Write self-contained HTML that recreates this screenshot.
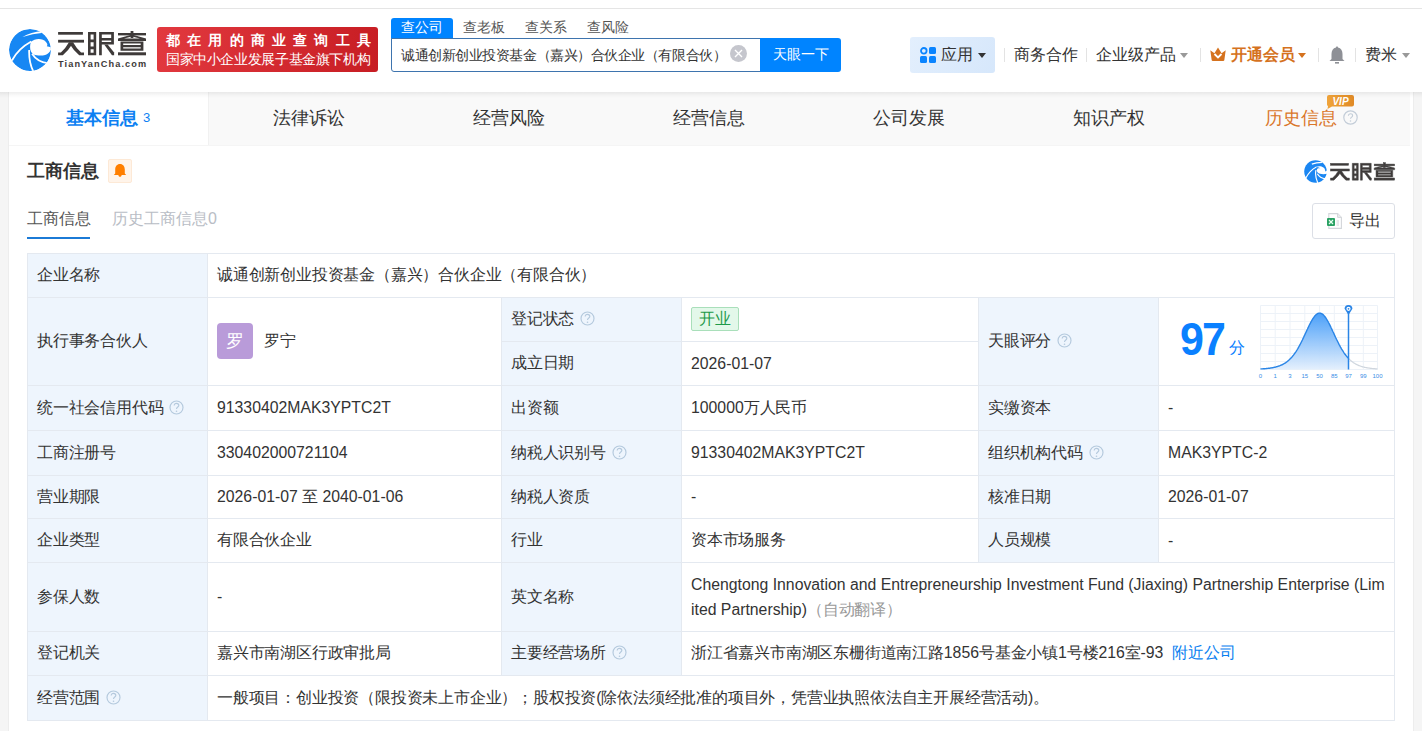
<!DOCTYPE html>
<html><head><meta charset="utf-8">
<style>
*{box-sizing:border-box;margin:0;padding:0}
html,body{width:1422px;height:731px;overflow:hidden}
body{background:#f5f5f5;font-family:"Liberation Sans",sans-serif;color:#333;position:relative;font-size:16px}
.a{position:absolute;white-space:nowrap}
#top{left:0;top:0;width:1422px;height:92px;background:#fff}
#topline{left:0;top:8px;width:1422px;height:1px;background:#e5e5e5}
#hshadow{left:0;top:92px;width:1422px;height:6px;background:linear-gradient(rgba(0,0,0,.065),rgba(0,0,0,.02) 60%,rgba(0,0,0,0))}
#card{left:8px;top:92px;width:1406px;height:660px;background:#fff;border-left:1px solid #ededed;border-right:1px solid #ededed}
#tabs{left:9px;top:92px;width:1401px;height:54px;background:#f9f9f9;border-bottom:1px solid #f5f5f5}
.tab{top:0;height:53px;width:200px;line-height:53px;text-align:center;font-size:18px;color:#333}
.tab.on{background:#fff;color:#0c7ff2;font-weight:bold}
.hdr-sep{width:1px;height:14px;top:48px;background:#e3e3e3}
.nav{top:43px;line-height:24px;font-size:16px;color:#333}
.caret{width:0;height:0;border-left:4px solid transparent;border-right:4px solid transparent;border-top:5px solid #999}
</style><style>
.c{position:absolute;border-left:1px solid #e4e9f0;border-top:1px solid #e4e9f0;padding-left:9px;display:flex;align-items:center;font-size:16px;letter-spacing:-0.2px;color:#333;white-space:nowrap;background:#fff}
.c.lab{background:#eef5fd}
.l{font-size:15.8px;letter-spacing:0}
.av{display:inline-block;vertical-align:middle;position:relative;top:-1px;width:36px;height:36px;border-radius:4px;background:#b99bd9;color:#fff;font-size:18px;line-height:36px;text-align:center}
.tag{display:inline-block;position:relative;top:-1px;height:24px;line-height:22px;padding:0 7px;border:1px solid #a9dfba;border-radius:2px;background:#e3f8ea;color:#1f9a4a}
svg.q{display:inline-block;vertical-align:middle;margin-left:6px;position:relative}
.en{font-size:15.8px;letter-spacing:0;line-height:25px;white-space:nowrap}
.tr{color:#999;font-size:16px;letter-spacing:-0.2px}
.lnk{color:#0a7ff0;margin-left:9px}
</style></head><body>
<div class="a" id="top"></div>
<div class="a" id="topline"></div>
<svg class="a" style="left:9px;top:29px" width="42" height="42" viewBox="0 0 100 100"><defs><clipPath id="cc"><circle cx="50" cy="50" r="50"/></clipPath></defs>
<g clip-path="url(#cc)"><circle cx="50" cy="50" r="50" fill="#1787f3"/>
<path d="M52 31 C62 22 80 21 89 32 C92 36 92 39 90 41 L101 44 L101 47 C98 54 93 60 86 62 C78 64 66 64 58 60 C51 56 48 45 52 31Z" fill="#fff"/>
<path d="M7 75 Q22 47 53 30" stroke="#fff" stroke-width="4.2" fill="none"/>
<path d="M48 50 Q47 80 58 101" stroke="#fff" stroke-width="4.2" fill="none"/>
<path d="M55 59 Q67 79 95 82" stroke="#fff" stroke-width="4.2" fill="none"/>
<path d="M32 19 Q52 8 80 5 L82 9 Q56 11 32 19Z" fill="#fff"/>
</g></svg>
<svg class="a" style="left:0;top:0" width="150" height="60" viewBox="0 0 150 60"><g id="tyc" fill="#3e3a39">
<rect x="58.1" y="32" width="24.8" height="2.7"/><rect x="58.1" y="39.8" width="25.9" height="2.8"/>
<path d="M68.8 42.5 L73.4 42.5 Q68.5 50.5 62.8 55.3 L58.1 55.3 L58.1 52.5 L60.9 52.5 Q65.8 48 68.8 42.5Z"/><path d="M68.6 42.5 L73.2 42.5 Q76.2 48 81.1 52.5 L84 52.5 L84 55.3 L79.2 55.3 Q73.5 50.5 68.6 42.5Z"/>
<path d="M88 32 H96.2 V55.3 H88Z M90.6 34.6 V39.6 H93.6 V34.6Z M90.6 42.2 V46.6 H93.6 V42.2Z M90.6 49.2 V52.7 H93.6 V49.2Z" fill-rule="evenodd"/>
<path d="M99.1 32 H113.9 V44.6 H101.8 V55.3 H99.1Z M101.8 34.6 V37.9 H111.2 V34.6Z M101.8 40.4 V42 H111.2 V40.4Z" fill-rule="evenodd"/>
<path d="M104.2 44.6 L107.6 44.6 L114.1 52.6 L114.1 55.3 L112 55.3Z"/>
<rect x="118" y="33" width="28" height="2.4"/><rect x="130.6" y="31" width="2.8" height="7"/>
<path d="M118 38.4 L130.5 35 L133.5 35 L146 38.4 L146 40.9 L118 40.9Z M124 38.4 L140 38.4 L132 36.4Z" fill-rule="evenodd"/>
<path d="M120.5 41.6 H143.4 V50.8 H120.5Z M123.2 43.4 V45 H140.7 V43.4Z M123.2 47.2 V48.4 H140.7 V47.2Z" fill-rule="evenodd"/>
<rect x="118" y="52.3" width="28" height="3"/>
</g></svg>
<div class="a" style="left:58px;top:59px;font-size:9.2px;line-height:11px;font-weight:bold;color:#3e3a39;letter-spacing:1.1px">TianYanCha.com</div>
<div class="a" style="left:157px;top:27px;width:221px;height:45px;border-radius:3px;background:linear-gradient(100deg,#e2393f,#c71d23)"></div>
<div class="a" style="left:166px;top:32px;font-size:13.5px;line-height:18px;color:#fff;font-weight:bold;letter-spacing:7.2px">都在用的商业查询工具</div>
<div class="a" style="left:166px;top:50px;font-size:14px;line-height:18px;color:#fff;letter-spacing:-0.38px">国家中小企业发展子基金旗下机构</div>
<div class="a" style="left:391px;top:18px;width:62px;height:21px;background:#0084ff;border-radius:3px 3px 0 0"></div>
<div class="a" style="left:391px;top:18px;width:62px;line-height:20px;font-size:13.5px;color:#fff;text-align:center">查公司</div>
<div class="a" style="left:463px;top:18px;line-height:20px;font-size:13.5px;color:#555">查老板</div>
<div class="a" style="left:525px;top:18px;line-height:20px;font-size:13.5px;color:#555">查关系</div>
<div class="a" style="left:587px;top:18px;line-height:20px;font-size:13.5px;color:#555">查风险</div>
<div class="a" style="left:391px;top:38px;width:372px;height:34px;border:1px solid #3e74ae;border-radius:0 0 0 3px;background:#fff"></div>
<div class="a" style="left:401px;top:43px;line-height:24px;font-size:14px;letter-spacing:-0.45px;color:#333">诚通创新创业投资基金（嘉兴）合伙企业（有限合伙）</div>
<div class="a" style="left:730px;top:45px;width:17px;height:17px;border-radius:50%;background:#c5c6cd"></div>
<svg class="a" style="left:730px;top:45px" width="17" height="17"><path d="M5 5 L12 12 M12 5 L5 12" stroke="#fff" stroke-width="1.4"/></svg>
<div class="a" style="left:760px;top:38px;width:81px;height:34px;background:#0084ff;border-radius:0 3px 3px 0;color:#fff;font-size:14px;line-height:33px;text-align:center">天眼一下</div>
<div class="a" style="left:910px;top:37px;width:85px;height:36px;border-radius:3px;background:linear-gradient(120deg,#e3effd,#d6e7fb)"></div>
<svg class="a" style="left:920px;top:47px" width="16" height="16"><circle cx="3.8" cy="3.8" r="2.8" fill="none" stroke="#0a84ff" stroke-width="1.8"/><rect x="9" y="0" width="7" height="7" rx="1.5" fill="#0a84ff"/><rect x="0" y="9" width="7" height="7" rx="1.5" fill="#0a84ff"/><rect x="9" y="9" width="7" height="7" rx="1.5" fill="#0a84ff"/></svg>
<div class="a nav" style="left:941px">应用</div>
<div class="a caret" style="left:978px;top:53px;border-top-color:#333"></div>
<div class="a hdr-sep" style="left:1004px"></div>
<div class="a nav" style="left:1014px">商务合作</div>
<div class="a hdr-sep" style="left:1086px"></div>
<div class="a nav" style="left:1096px">企业级产品</div>
<div class="a caret" style="left:1180px;top:53px;border-top-color:#999"></div>
<div class="a hdr-sep" style="left:1200px"></div>
<svg class="a" style="left:1210px;top:47px" width="16" height="14" viewBox="0 0 16 14"><path d="M0.3 3.2 L4.4 6.2 L8 0.4 L11.6 6.2 L15.7 3.2 L14.3 13.2 Q14.1 14 13.2 14 L2.8 14 Q1.9 14 1.7 13.2Z" fill="#d5721e"/><path d="M4.5 7 L8 10.5 L11.5 7" stroke="#fff" stroke-width="1.8" fill="none"/></svg>
<div class="a nav" style="left:1231px;color:#d5721e;font-weight:bold">开通会员</div>
<div class="a caret" style="left:1298px;top:53px;border-top-color:#d5721e"></div>
<div class="a hdr-sep" style="left:1318px"></div>
<svg class="a" style="left:1329px;top:46px" width="16" height="18" viewBox="0 0 16 18"><path d="M8 0.5 C8.8 0.5 9 1 9 1.6 C12 2.3 13.5 5 13.5 8 L13.5 13 L15.5 15 L0.5 15 L2.5 13 L2.5 8 C2.5 5 4 2.3 7 1.6 C7 1 7.2 0.5 8 0.5Z" fill="#8e9096"/><rect x="6" y="16" width="4" height="1.6" fill="#8e9096"/></svg>
<div class="a hdr-sep" style="left:1355px"></div>
<div class="a nav" style="left:1365px">费米</div>
<div class="a caret" style="left:1402px;top:53px;border-top-color:#999"></div>

<div class="a" id="card"></div>
<div class="a" id="tabs">
  <div class="a tab on" style="left:0;width:199px;padding-left:1px">基本信息<span style="font-weight:normal;font-size:13px;margin-left:6px;position:relative;top:-2px;left:-1.5px">3</span></div>
  <div class="a" style="left:199px;top:0;width:1px;height:53px;background:#f1f1f1"></div>
  <div class="a tab" style="left:200px">法律诉讼</div>
  <div class="a tab" style="left:400px">经营风险</div>
  <div class="a tab" style="left:600px">经营信息</div>
  <div class="a tab" style="left:800px">公司发展</div>
  <div class="a tab" style="left:1000px">知识产权</div>
  <div class="a tab" style="left:1200px;color:#d9762a;padding-left:4px">历史信息<svg width="15" height="15" viewBox="0 0 15 15" style="vertical-align:middle;margin-left:6px;position:relative;top:-2px"><circle cx="7.5" cy="7.5" r="6.7" fill="none" stroke="#c3cdd8" stroke-width="1.2"/><path d="M5.4 5.8 C5.4 4.5 6.3 3.8 7.5 3.8 C8.7 3.8 9.6 4.6 9.6 5.7 C9.6 7 7.5 7.2 7.5 8.7" fill="none" stroke="#c3cdd8" stroke-width="1.1"/><circle cx="7.5" cy="10.9" r="0.75" fill="#c3cdd8"/></svg></div>
  <svg class="a" style="left:1317px;top:3px" width="28" height="14" viewBox="0 0 28 14"><defs><linearGradient id="vg" x1="0" y1="0" x2="1" y2="0"><stop offset="0" stop-color="#f0a43a"/><stop offset="1" stop-color="#e08a26"/></linearGradient></defs><path d="M3 0 H26 Q28 0 28 2 V9.5 Q28 11.5 26 11.5 H6 L1.5 14 L2 11 Q1 10.5 1 9.5 V2 Q1 0 3 0Z" fill="url(#vg)"/><text x="14.5" y="9.6" font-family="Liberation Sans" font-weight="bold" font-style="italic" font-size="10" fill="#fff" text-anchor="middle">VIP</text></svg>
</div>
<div class="a" id="hshadow"></div>
<div class="a" style="left:27px;top:159px;font-size:18px;line-height:24px;font-weight:bold;color:#333">工商信息</div>
<div class="a" style="left:108px;top:159px;width:24px;height:24px;border-radius:2px;background:#fff4ea;border:1px solid #fde9d6"></div>
<svg class="a" style="left:113px;top:163px" width="14" height="15" viewBox="0 0 14 15"><path d="M7 1 C10 1 11.8 3.4 11.8 6.6 L11.8 10.6 L13.2 12 L0.8 12 L2.2 10.6 L2.2 6.6 C2.2 3.4 4 1 7 1Z" fill="#ff7f00"/><path d="M5.4 12 L8.6 12 C8.6 13.2 7.9 13.8 7 13.8 C6.1 13.8 5.4 13.2 5.4 12Z" fill="#ff7f00"/></svg>
<svg class="a" style="left:1304px;top:160px" width="23" height="23" viewBox="0 0 100 100">
  <circle cx="50" cy="50" r="49" fill="#1a86f2"/>
  <path d="M50 30 C70 22 92 30 92 46 C92 52 96 50 100 46 L100 60 C90 62 78 62 70 60 C60 58 54 50 56 42 C58 36 66 34 72 38 C66 30 56 30 50 30Z" fill="#fff"/>
  <path d="M8 78 C20 55 34 40 54 30" stroke="#fff" stroke-width="5" fill="none"/>
  <path d="M34 18 C48 12 62 10 78 10" stroke="#fff" stroke-width="5" fill="none"/>
  <path d="M52 44 C48 62 52 82 60 100" stroke="#fff" stroke-width="5" fill="none"/>
  <path d="M58 60 C66 74 78 80 94 82" stroke="#fff" stroke-width="5" fill="none"/>
</svg>
<svg class="a" style="left:1320px;top:150px" width="80" height="40" viewBox="0 0 80 40"><g transform="translate(10.4 13) scale(0.73 0.72) translate(-58 -31.5)"><use href="#tyc" fill="#4a4a4a" stroke="#4a4a4a" stroke-width="0.7"/></g></svg>
<div class="a" style="left:27px;top:207px;font-size:16px;line-height:24px;color:#555">工商信息</div>
<div class="a" style="left:27px;top:237px;width:63px;height:2px;background:#1b7ad6"></div>
<div class="a" style="left:112px;top:207px;font-size:16px;line-height:24px;color:#b9bdc5">历史工商信息0</div>
<div class="a" style="left:1312px;top:203px;width:83px;height:36px;border:1px solid #dcdfe6;border-radius:3px;background:#fff"></div>
<svg class="a" style="left:1327px;top:213px" width="16" height="16" viewBox="0 0 16 16"><path d="M1.8 0.6 L10.6 0.6 L14.4 4.4 L14.4 15.4 L1.8 15.4Z" fill="#fff" stroke="#d3d6da" stroke-width="1.1"/><path d="M10.6 0.6 L10.6 4.4 L14.4 4.4" fill="#eceef0" stroke="#d3d6da" stroke-width="1"/><rect x="0" y="5" width="8" height="8" rx="1" fill="#2aa163"/><path d="M2 7 L6 11 M6 7 L2 11" stroke="#e8fff0" stroke-width="1.2"/><path d="M9.5 8 h2.5 M9.5 10 h2.5 M9.5 12 h2.5" stroke="#cfd2d6" stroke-width="1"/></svg>
<div class="a" style="left:1349px;top:209px;font-size:16px;line-height:24px;color:#333">导出</div>

<div class="a" style="left:27px;top:253px;width:1368px;height:468px;border-right:1px solid #e4e9f0;border-bottom:1px solid #e4e9f0"></div>
<div class="c lab" style="left:27px;top:253px;width:180px;height:44px;"><div>企业名称</div></div>
<div class="c" style="left:207px;top:253px;width:1187px;height:44px;"><div>诚通创新创业投资基金（嘉兴）合伙企业（有限合伙）</div></div>
<div class="c lab" style="left:27px;top:297px;width:180px;height:88px;"><div>执行事务合伙人</div></div>
<div class="c" style="left:207px;top:297px;width:294px;height:88px;"><div><span class="av">罗</span><span style="margin-left:11px">罗宁</span></div></div>
<div class="c lab" style="left:501px;top:297px;width:180px;height:44px;"><div>登记状态<svg class="q" id="q0" style="top:-1.266px;left:-0.203px" width="15" height="15" viewBox="0 0 15 15"><circle cx="7.5" cy="7.5" r="6.5" fill="none" stroke="#b4c9dd" stroke-width="1.15"/><path d="M5.2 5.6 C5.2 4.1 6.2 3.3 7.5 3.3 C8.8 3.3 9.8 4.2 9.8 5.4 C9.8 6.9 7.5 7.1 7.5 9" fill="none" stroke="#b4c9dd" stroke-width="1.15"/><circle cx="7.5" cy="11.2" r="0.8" fill="#b4c9dd"/></svg></div></div>
<div class="c" style="left:681px;top:297px;width:297px;height:44px;"><div><span class="tag">开业</span></div></div>
<div class="c lab" style="left:501px;top:341px;width:180px;height:44px;"><div>成立日期</div></div>
<div class="c" style="left:681px;top:341px;width:297px;height:44px;"><div><span class="l">2026-01-07</span></div></div>
<div class="c lab" style="left:978px;top:297px;width:180px;height:88px;"><div>天眼评分<svg class="q" id="q1" style="top:-1.266px;left:-0.203px" width="15" height="15" viewBox="0 0 15 15"><circle cx="7.5" cy="7.5" r="6.5" fill="none" stroke="#b4c9dd" stroke-width="1.15"/><path d="M5.2 5.6 C5.2 4.1 6.2 3.3 7.5 3.3 C8.8 3.3 9.8 4.2 9.8 5.4 C9.8 6.9 7.5 7.1 7.5 9" fill="none" stroke="#b4c9dd" stroke-width="1.15"/><circle cx="7.5" cy="11.2" r="0.8" fill="#b4c9dd"/></svg></div></div>
<div class="c" style="left:1158px;top:297px;width:236px;height:88px;"><div></div></div>
<div class="c lab" style="left:27px;top:385px;width:180px;height:45px;"><div>统一社会信用代码<svg class="q" id="q2" style="top:-0.766px;left:-0.406px" width="15" height="15" viewBox="0 0 15 15"><circle cx="7.5" cy="7.5" r="6.5" fill="none" stroke="#b4c9dd" stroke-width="1.15"/><path d="M5.2 5.6 C5.2 4.1 6.2 3.3 7.5 3.3 C8.8 3.3 9.8 4.2 9.8 5.4 C9.8 6.9 7.5 7.1 7.5 9" fill="none" stroke="#b4c9dd" stroke-width="1.15"/><circle cx="7.5" cy="11.2" r="0.8" fill="#b4c9dd"/></svg></div></div>
<div class="c" style="left:207px;top:385px;width:294px;height:45px;"><div><span class="l">91330402MAK3YPTC2T</span></div></div>
<div class="c lab" style="left:501px;top:385px;width:180px;height:45px;"><div>出资额</div></div>
<div class="c" style="left:681px;top:385px;width:297px;height:45px;"><div><span class="l">100000</span>万人民币</div></div>
<div class="c lab" style="left:978px;top:385px;width:180px;height:45px;"><div>实缴资本</div></div>
<div class="c" style="left:1158px;top:385px;width:236px;height:45px;"><div><span class="l">-</span></div></div>
<div class="c lab" style="left:27px;top:430px;width:180px;height:45px;"><div>工商注册号</div></div>
<div class="c" style="left:207px;top:430px;width:294px;height:45px;"><div><span class="l">330402000721104</span></div></div>
<div class="c lab" style="left:501px;top:430px;width:180px;height:45px;"><div>纳税人识别号<svg class="q" id="q3" style="top:-0.766px;left:0.188px" width="15" height="15" viewBox="0 0 15 15"><circle cx="7.5" cy="7.5" r="6.5" fill="none" stroke="#b4c9dd" stroke-width="1.15"/><path d="M5.2 5.6 C5.2 4.1 6.2 3.3 7.5 3.3 C8.8 3.3 9.8 4.2 9.8 5.4 C9.8 6.9 7.5 7.1 7.5 9" fill="none" stroke="#b4c9dd" stroke-width="1.15"/><circle cx="7.5" cy="11.2" r="0.8" fill="#b4c9dd"/></svg></div></div>
<div class="c" style="left:681px;top:430px;width:297px;height:45px;"><div><span class="l">91330402MAK3YPTC2T</span></div></div>
<div class="c lab" style="left:978px;top:430px;width:180px;height:45px;"><div>组织机构代码<svg class="q" id="q4" style="top:-0.766px;left:0.188px" width="15" height="15" viewBox="0 0 15 15"><circle cx="7.5" cy="7.5" r="6.5" fill="none" stroke="#b4c9dd" stroke-width="1.15"/><path d="M5.2 5.6 C5.2 4.1 6.2 3.3 7.5 3.3 C8.8 3.3 9.8 4.2 9.8 5.4 C9.8 6.9 7.5 7.1 7.5 9" fill="none" stroke="#b4c9dd" stroke-width="1.15"/><circle cx="7.5" cy="11.2" r="0.8" fill="#b4c9dd"/></svg></div></div>
<div class="c" style="left:1158px;top:430px;width:236px;height:45px;"><div><span class="l">MAK3YPTC-2</span></div></div>
<div class="c lab" style="left:27px;top:475px;width:180px;height:43px;"><div>营业期限</div></div>
<div class="c" style="left:207px;top:475px;width:294px;height:43px;"><div><span class="l">2026-01-07 </span>至<span class="l"> 2040-01-06</span></div></div>
<div class="c lab" style="left:501px;top:475px;width:180px;height:43px;"><div>纳税人资质</div></div>
<div class="c" style="left:681px;top:475px;width:297px;height:43px;"><div><span class="l">-</span></div></div>
<div class="c lab" style="left:978px;top:475px;width:180px;height:43px;"><div>核准日期</div></div>
<div class="c" style="left:1158px;top:475px;width:236px;height:43px;"><div><span class="l">2026-01-07</span></div></div>
<div class="c lab" style="left:27px;top:518px;width:180px;height:44px;"><div>企业类型</div></div>
<div class="c" style="left:207px;top:518px;width:294px;height:44px;"><div>有限合伙企业</div></div>
<div class="c lab" style="left:501px;top:518px;width:180px;height:44px;"><div>行业</div></div>
<div class="c" style="left:681px;top:518px;width:297px;height:44px;"><div>资本市场服务</div></div>
<div class="c lab" style="left:978px;top:518px;width:180px;height:44px;"><div>人员规模</div></div>
<div class="c" style="left:1158px;top:518px;width:236px;height:44px;"><div><span class="l">-</span></div></div>
<div class="c lab" style="left:27px;top:562px;width:180px;height:69px;"><div>参保人数</div></div>
<div class="c" style="left:207px;top:562px;width:294px;height:69px;"><div><span class="l">-</span></div></div>
<div class="c lab" style="left:501px;top:562px;width:180px;height:69px;"><div>英文名称</div></div>
<div class="c" style="left:681px;top:562px;width:713px;height:69px;"><div><div class="en">Chengtong Innovation and Entrepreneurship Investment Fund (Jiaxing) Partnership Enterprise (Lim<br>ited Partnership)<span class="tr">（自动翻译）</span></div></div></div>
<div class="c lab" style="left:27px;top:631px;width:180px;height:44px;"><div>登记机关</div></div>
<div class="c" style="left:207px;top:631px;width:294px;height:44px;"><div>嘉兴市南湖区行政审批局</div></div>
<div class="c lab" style="left:501px;top:631px;width:180px;height:44px;"><div>主要经营场所<svg class="q" id="q5" style="top:-1.266px;left:0.188px" width="15" height="15" viewBox="0 0 15 15"><circle cx="7.5" cy="7.5" r="6.5" fill="none" stroke="#b4c9dd" stroke-width="1.15"/><path d="M5.2 5.6 C5.2 4.1 6.2 3.3 7.5 3.3 C8.8 3.3 9.8 4.2 9.8 5.4 C9.8 6.9 7.5 7.1 7.5 9" fill="none" stroke="#b4c9dd" stroke-width="1.15"/><circle cx="7.5" cy="11.2" r="0.8" fill="#b4c9dd"/></svg></div></div>
<div class="c" style="left:681px;top:631px;width:713px;height:44px;"><div>浙江省嘉兴市南湖区东栅街道南江路<span class="l">1856</span>号基金小镇<span class="l">1</span>号楼<span class="l">216</span>室<span class="l">-93</span><span class="lnk">附近公司</span></div></div>
<div class="c lab" style="left:27px;top:675px;width:180px;height:45px;"><div>经营范围<svg class="q" id="q6" style="top:-0.766px;left:-0.203px" width="15" height="15" viewBox="0 0 15 15"><circle cx="7.5" cy="7.5" r="6.5" fill="none" stroke="#b4c9dd" stroke-width="1.15"/><path d="M5.2 5.6 C5.2 4.1 6.2 3.3 7.5 3.3 C8.8 3.3 9.8 4.2 9.8 5.4 C9.8 6.9 7.5 7.1 7.5 9" fill="none" stroke="#b4c9dd" stroke-width="1.15"/><circle cx="7.5" cy="11.2" r="0.8" fill="#b4c9dd"/></svg></div></div>
<div class="c" style="left:207px;top:675px;width:1187px;height:45px;"><div>一般项目：创业投资（限投资未上市企业）；股权投资<span class="l">(</span>除依法须经批准的项目外，凭营业执照依法自主开展经营活动<span class="l">)</span>。</div></div><svg class="a" style="left:1158px;top:297px" width="236" height="88">
<defs><linearGradient id="gf" x1="0" y1="0" x2="0" y2="1"><stop offset="0" stop-color="#429bf8"/><stop offset="1" stop-color="#e3effd"/></linearGradient></defs>
<g stroke="#edf2f8" stroke-width="1"><line x1="102.5" y1="8.5" x2="102.5" y2="72.5"/><line x1="117.2" y1="8.5" x2="117.2" y2="72.5"/><line x1="132.0" y1="8.5" x2="132.0" y2="72.5"/><line x1="146.8" y1="8.5" x2="146.8" y2="72.5"/><line x1="161.6" y1="8.5" x2="161.6" y2="72.5"/><line x1="176.3" y1="8.5" x2="176.3" y2="72.5"/><line x1="190.5" y1="8.5" x2="190.5" y2="72.5"/><line x1="205.3" y1="8.5" x2="205.3" y2="72.5"/><line x1="219.5" y1="8.5" x2="219.5" y2="72.5"/><line x1="102.5" y1="8.5" x2="219.5" y2="8.5"/><line x1="102.5" y1="16.5" x2="219.5" y2="16.5"/><line x1="102.5" y1="24.5" x2="219.5" y2="24.5"/><line x1="102.5" y1="32.5" x2="219.5" y2="32.5"/><line x1="102.5" y1="40.5" x2="219.5" y2="40.5"/><line x1="102.5" y1="48.5" x2="219.5" y2="48.5"/><line x1="102.5" y1="56.5" x2="219.5" y2="56.5"/><line x1="102.5" y1="64.5" x2="219.5" y2="64.5"/><line x1="102.5" y1="72.5" x2="219.5" y2="72.5"/></g>
<path d="M102.5 72.0 L103.0 71.9 L103.5 71.9 L104.0 71.9 L104.5 71.9 L105.0 71.8 L105.5 71.8 L106.0 71.7 L106.5 71.7 L107.0 71.7 L107.5 71.6 L108.0 71.6 L108.5 71.5 L109.0 71.5 L109.5 71.4 L110.0 71.4 L110.5 71.3 L111.0 71.3 L111.5 71.2 L112.0 71.1 L112.5 71.0 L113.0 71.0 L113.5 70.9 L114.0 70.8 L114.5 70.7 L115.0 70.6 L115.5 70.5 L116.0 70.4 L116.5 70.3 L117.0 70.2 L117.5 70.1 L118.0 69.9 L118.5 69.8 L119.0 69.7 L119.5 69.5 L120.0 69.4 L120.5 69.2 L121.0 69.0 L121.5 68.8 L122.0 68.7 L122.5 68.4 L123.0 68.2 L123.5 68.0 L124.0 67.8 L124.5 67.5 L125.0 67.3 L125.5 67.0 L126.0 66.7 L126.5 66.4 L127.0 66.1 L127.5 65.8 L128.0 65.4 L128.5 65.1 L129.0 64.7 L129.5 64.3 L130.0 63.9 L130.5 63.5 L131.0 63.0 L131.5 62.6 L132.0 62.1 L132.5 61.6 L133.0 61.1 L133.5 60.5 L134.0 59.9 L134.5 59.4 L135.0 58.7 L135.5 58.1 L136.0 57.4 L136.5 56.8 L137.0 56.0 L137.5 55.3 L138.0 54.6 L138.5 53.8 L139.0 53.0 L139.5 52.1 L140.0 51.3 L140.5 50.4 L141.0 49.5 L141.5 48.6 L142.0 47.7 L142.5 46.7 L143.0 45.7 L143.5 44.7 L144.0 43.7 L144.5 42.7 L145.0 41.6 L145.5 40.6 L146.0 39.5 L146.5 38.4 L147.0 37.4 L147.5 36.3 L148.0 35.2 L148.5 34.1 L149.0 33.0 L149.5 32.0 L150.0 30.9 L150.5 29.9 L151.0 28.8 L151.5 27.8 L152.0 26.8 L152.5 25.9 L153.0 24.9 L153.5 24.0 L154.0 23.1 L154.5 22.3 L155.0 21.5 L155.5 20.8 L156.0 20.1 L156.5 19.4 L157.0 18.8 L157.5 18.3 L158.0 17.8 L158.5 17.4 L159.0 17.0 L159.5 16.7 L160.0 16.4 L160.5 16.3 L161.0 16.1 L161.5 16.1 L162.0 16.1 L162.5 16.2 L163.0 16.4 L163.5 16.6 L164.0 16.9 L164.5 17.2 L165.0 17.6 L165.5 18.1 L166.0 18.6 L166.5 19.2 L167.0 19.8 L167.5 20.5 L168.0 21.2 L168.5 22.0 L169.0 22.8 L169.5 23.7 L170.0 24.5 L170.5 25.5 L171.0 26.4 L171.5 27.4 L172.0 28.4 L172.5 29.4 L173.0 30.5 L173.5 31.5 L174.0 32.6 L174.5 33.7 L175.0 34.8 L175.5 35.8 L176.0 36.9 L176.5 38.0 L177.0 39.1 L177.5 40.2 L178.0 41.2 L178.5 42.3 L179.0 43.3 L179.5 44.3 L180.0 45.3 L180.5 46.3 L181.0 47.3 L181.5 48.2 L182.0 49.2 L182.5 50.1 L183.0 50.9 L183.5 51.8 L184.0 52.6 L184.5 53.5 L185.0 54.2 L185.5 55.0 L186.0 55.8 L186.5 56.5 L187.0 57.2 L187.5 57.8 L188.0 58.5 L188.5 59.1 L189.0 59.7 L189.5 60.3 L190.0 60.8 L190.5 61.4 L190.5 61.4 L190.5 72.5 L102.5 72.5Z" fill="url(#gf)" opacity="0.95"/>
<path d="M102.5 72.0 L103.0 71.9 L103.5 71.9 L104.0 71.9 L104.5 71.9 L105.0 71.8 L105.5 71.8 L106.0 71.7 L106.5 71.7 L107.0 71.7 L107.5 71.6 L108.0 71.6 L108.5 71.5 L109.0 71.5 L109.5 71.4 L110.0 71.4 L110.5 71.3 L111.0 71.3 L111.5 71.2 L112.0 71.1 L112.5 71.0 L113.0 71.0 L113.5 70.9 L114.0 70.8 L114.5 70.7 L115.0 70.6 L115.5 70.5 L116.0 70.4 L116.5 70.3 L117.0 70.2 L117.5 70.1 L118.0 69.9 L118.5 69.8 L119.0 69.7 L119.5 69.5 L120.0 69.4 L120.5 69.2 L121.0 69.0 L121.5 68.8 L122.0 68.7 L122.5 68.4 L123.0 68.2 L123.5 68.0 L124.0 67.8 L124.5 67.5 L125.0 67.3 L125.5 67.0 L126.0 66.7 L126.5 66.4 L127.0 66.1 L127.5 65.8 L128.0 65.4 L128.5 65.1 L129.0 64.7 L129.5 64.3 L130.0 63.9 L130.5 63.5 L131.0 63.0 L131.5 62.6 L132.0 62.1 L132.5 61.6 L133.0 61.1 L133.5 60.5 L134.0 59.9 L134.5 59.4 L135.0 58.7 L135.5 58.1 L136.0 57.4 L136.5 56.8 L137.0 56.0 L137.5 55.3 L138.0 54.6 L138.5 53.8 L139.0 53.0 L139.5 52.1 L140.0 51.3 L140.5 50.4 L141.0 49.5 L141.5 48.6 L142.0 47.7 L142.5 46.7 L143.0 45.7 L143.5 44.7 L144.0 43.7 L144.5 42.7 L145.0 41.6 L145.5 40.6 L146.0 39.5 L146.5 38.4 L147.0 37.4 L147.5 36.3 L148.0 35.2 L148.5 34.1 L149.0 33.0 L149.5 32.0 L150.0 30.9 L150.5 29.9 L151.0 28.8 L151.5 27.8 L152.0 26.8 L152.5 25.9 L153.0 24.9 L153.5 24.0 L154.0 23.1 L154.5 22.3 L155.0 21.5 L155.5 20.8 L156.0 20.1 L156.5 19.4 L157.0 18.8 L157.5 18.3 L158.0 17.8 L158.5 17.4 L159.0 17.0 L159.5 16.7 L160.0 16.4 L160.5 16.3 L161.0 16.1 L161.5 16.1 L162.0 16.1 L162.5 16.2 L163.0 16.4 L163.5 16.6 L164.0 16.9 L164.5 17.2 L165.0 17.6 L165.5 18.1 L166.0 18.6 L166.5 19.2 L167.0 19.8 L167.5 20.5 L168.0 21.2 L168.5 22.0 L169.0 22.8 L169.5 23.7 L170.0 24.5 L170.5 25.5 L171.0 26.4 L171.5 27.4 L172.0 28.4 L172.5 29.4 L173.0 30.5 L173.5 31.5 L174.0 32.6 L174.5 33.7 L175.0 34.8 L175.5 35.8 L176.0 36.9 L176.5 38.0 L177.0 39.1 L177.5 40.2 L178.0 41.2 L178.5 42.3 L179.0 43.3 L179.5 44.3 L180.0 45.3 L180.5 46.3 L181.0 47.3 L181.5 48.2 L182.0 49.2 L182.5 50.1 L183.0 50.9 L183.5 51.8 L184.0 52.6 L184.5 53.5 L185.0 54.2 L185.5 55.0 L186.0 55.8 L186.5 56.5 L187.0 57.2 L187.5 57.8 L188.0 58.5 L188.5 59.1 L189.0 59.7 L189.5 60.3 L190.0 60.8 L190.5 61.4 L190.5 61.4" fill="none" stroke="#2a85e6" stroke-width="1.4"/>
<path d="M190.5 61.4 L191.0 61.9 L191.5 62.4 L192.0 62.9 L192.5 63.3 L193.0 63.7 L193.5 64.2 L194.0 64.6 L194.5 64.9 L195.0 65.3 L195.5 65.7 L196.0 66.0 L196.5 66.3 L197.0 66.6 L197.5 66.9 L198.0 67.2 L198.5 67.4 L199.0 67.7 L199.5 67.9 L200.0 68.1 L200.5 68.4 L201.0 68.6 L201.5 68.8 L202.0 69.0 L202.5 69.1 L203.0 69.3 L203.5 69.5 L204.0 69.6 L204.5 69.8 L205.0 69.9 L205.5 70.0 L206.0 70.1 L206.5 70.3 L207.0 70.4 L207.5 70.5 L208.0 70.6 L208.5 70.7 L209.0 70.8 L209.5 70.9 L210.0 70.9 L210.5 71.0 L211.0 71.1 L211.5 71.2 L212.0 71.2 L212.5 71.3 L213.0 71.3 L213.5 71.4 L214.0 71.5 L214.5 71.5 L215.0 71.6 L215.5 71.6 L216.0 71.6 L216.5 71.7 L217.0 71.7 L217.5 71.8 L218.0 71.8 L218.5 71.8 L219.0 71.9 L219.5 71.9" fill="none" stroke="#cfd6de" stroke-width="1.2"/>
<line x1="190.5" y1="72.5" x2="190.5" y2="15" stroke="#2a85e6" stroke-width="1.5"/>
<path d="M186.6 11.8 A3.9 3.9 0 1 1 194.4 11.8 L190.5 18 Z" fill="#2a85e6"/>
<circle cx="190.5" cy="11.8" r="2.1" fill="#fff"/>
<circle cx="190.5" cy="11.8" r="0.9" fill="#2a85e6"/>
<g fill="#3a8ee6" font-size="6" text-anchor="middle" font-family="Liberation Sans"><text x="102.5" y="80.5">0</text><text x="117.2" y="80.5">1</text><text x="132.0" y="80.5">3</text><text x="146.8" y="80.5">15</text><text x="161.6" y="80.5">50</text><text x="176.3" y="80.5">85</text><text x="190.5" y="80.5">97</text><text x="205.3" y="80.5">99</text><text x="219.5" y="80.5">100</text></g>
</svg>
<div class="a" style="left:1180px;top:314px;font-size:43px;line-height:48px;font-weight:bold;color:#0a80ff;letter-spacing:-2px;transform:scaleY(1.07);transform-origin:0 10px">97</div>
<div class="a" style="left:1229px;top:336px;font-size:16px;line-height:24px;color:#0a80ff">分</div>

</body></html>
